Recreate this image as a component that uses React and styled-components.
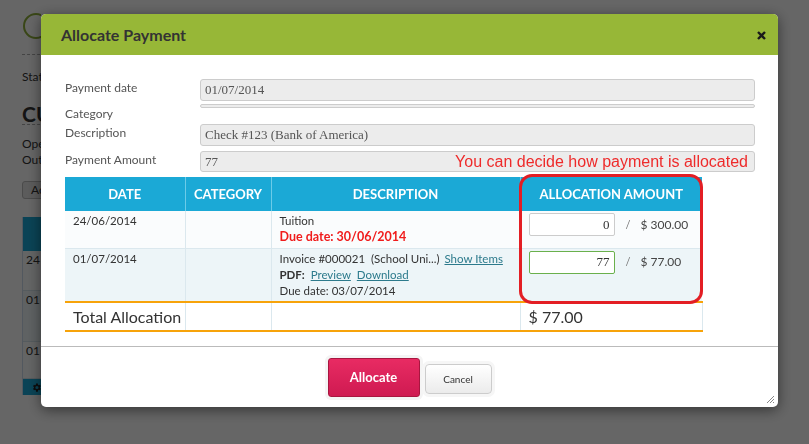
import styled, { createGlobalStyle } from 'styled-components';

const GlobalStyle = createGlobalStyle`
  html, body { margin: 0; padding: 0; background: #fff; }
  body { font-family: Lato, "Liberation Sans", Arial, sans-serif; color: #333; }
`;

// ---- page underneath the dialog (only its left strip shows) ----
const Page = styled.div`
  width: 41px;
  height: 444px;
  box-sizing: border-box;
  padding: 13px 0 0 22px;
  overflow: hidden;
  white-space: nowrap;
`;
const Avatar = styled.div`
  width: 22px;
  height: 22px;
  border: 2px solid #8fb03a;
  border-radius: 50%;
  margin-left: 1px;
`;
const Dashed = styled.div`
  width: 220px;
  border-top: 1px dashed #aaa;
  margin-top: ${p => p.$mt}px;
`;
const PageText = styled.div`
  font-size: 12px;
  line-height: 16px;
  margin-top: ${p => p.$mt || 0}px;
`;
const PageHeading = styled.div`
  font-size: 21px;
  font-weight: 700;
  line-height: 24px;
  margin-top: 17px;
`;
const PageButton = styled.div`
  width: fit-content;
  box-sizing: border-box;
  height: 18px;
  margin-top: 13px;
  padding: 0 20px 0 8px;
  font-size: 12px;
  line-height: 16px;
  background: #e6e6e6;
  border: 1px solid #bbb;
  border-radius: 3px;
`;
const PageTable = styled.div`
  width: 300px;
  margin-top: 18px;
  border-left: 1px solid #cde;
`;
const PageHead = styled.div`
  height: 34px;
  background: #1ba9d6;
`;
const PageRow = styled.div`
  height: ${p => p.$h}px;
  padding: 1px 0 0 3px;
  box-sizing: border-box;
  font-size: 12px;
  line-height: 16px;
  border-bottom: 1px solid #d4e3ea;
  background: ${p => p.$bg};
`;
const PageFoot = styled.div`
  height: 16px;
  background: #1ba9d6;
  padding-left: 8px;
  display: flex;
  align-items: center;
`;

// ---- dialog ----
const Overlay = styled.div`
  position: fixed;
  inset: 0;
  background: rgba(0, 0, 0, 0.6);
`;
const Modal = styled.div`
  position: fixed;
  left: 41px;
  top: 14px;
  width: 737px;
  height: 393px;
  background: #fff;
  border-radius: 5px;
  box-shadow: 0 3px 14px rgba(0, 0, 0, 0.5);
  display: flex;
  flex-direction: column;
  overflow: hidden;
`;
const Header = styled.div`
  height: 41px;
  flex: none;
  background: #97b737;
  display: flex;
  align-items: center;
  justify-content: space-between;
  padding: 0 10px 0 20px;
`;
const Title = styled.div`
  font-size: 16px;
  font-weight: 700;
  color: #333;
`;
const Close = styled.button`
  border: 0;
  background: none;
  padding: 0;
  width: 14px;
  height: 14px;
  display: flex;
  align-items: center;
  justify-content: center;
  margin-top: 2px;
`;
const Body = styled.div`
  flex: none;
  padding: 24px 23px 14px 24px;
  border-bottom: 1px solid #bbb;
`;
const FormRow = styled.div`
  display: flex;
  align-items: flex-start;
  margin-bottom: ${p => p.$mb}px;
`;
const Label = styled.div`
  width: 135px;
  flex: none;
  font-size: 12px;
  line-height: 14px;
  color: #555;
  padding-top: ${p => p.$pt}px;
`;
const Field = styled.div`
  flex: 1;
  height: ${p => p.$h}px;
  box-sizing: border-box;
  background: #ececec;
  border: 1px solid #ccc;
  border-radius: 3px;
  padding: 0 6px 0 4px;
  display: flex;
  align-items: center;
  justify-content: space-between;
  font-family: "Liberation Serif", Georgia, serif;
  font-size: 13px;
  color: #555;
`;
const Note = styled.span`
  font-family: "Liberation Sans", Arial, sans-serif;
  font-size: 16px;
  color: #ee2b2b;
`;
const TableWrap = styled.div`
  position: relative;
  width: 637px;
`;
const Table = styled.table`
  width: 637px;
  border-collapse: collapse;
  table-layout: fixed;
`;
const Th = styled.th`
  height: 34px;
  padding: 0;
  background: #1ba9d6;
  color: #fff;
  font-size: 13px;
  font-weight: 700;
  text-align: center;
  border-left: 1px solid #6ccbe8;
  &:first-child { border-left: 0; }
`;
const Tr = styled.tr`
  height: ${p => p.$h}px;
  background: ${p => p.$bg};
  border-bottom: 1px solid #dbe8ee;
`;
const Td = styled.td`
  vertical-align: top;
  padding: 2px 8px 0;
  font-size: 11.5px;
  line-height: 16px;
  color: #333;
  border-left: 1px solid #dbe8ee;
  &:first-child { border-left: 0; }
`;
const TotalRow = styled.tr`
  height: 29px;
  border-top: 2px solid #f7a30a;
  border-bottom: 2px solid #f7a30a;
`;
const TotalTd = styled.td`
  padding: 0 8px;
  font-size: 16px;
  line-height: 20px;
  white-space: nowrap;
  color: #333;
  border-left: 1px solid #dbe8ee;
  &:first-child { border-left: 0; }
  &:last-child { border-right: 1px solid #dbe8ee; }
`;
const Due = styled.div`
  color: ${p => (p.$red ? '#f01c1c' : '#333')};
  font-weight: ${p => (p.$red ? 700 : 400)};
  font-size: ${p => (p.$red ? '12.5px' : '11.5px')};
`;
const Link = styled.a`
  color: #2c7a8c;
  text-decoration: underline;
  margin-left: ${p => p.$ml || 0}px;
`;
const AllocCell = styled.div`
  display: flex;
  align-items: center;
  gap: 9px;
`;
const AmountInput = styled.div`
  width: 86px;
  height: 23px;
  box-sizing: border-box;
  background: #fff;
  border: 1px solid ${p => (p.$ok ? '#6ab04c' : '#ccc')};
  border-radius: 2px;
  padding: 0 4px;
  display: flex;
  align-items: center;
  justify-content: flex-end;
  font-family: "Liberation Serif", Georgia, serif;
  font-size: 13px;
  color: #333;
`;
const Slash = styled.span`
  font-size: 11px;
  color: #777;
  margin: 0 1px 0 2px;
`;
const Amount = styled.span`
  font-size: 12px;
  color: #444;
`;
const Highlight = styled.div`
  position: absolute;
  left: 454px;
  top: -3px;
  width: 184px;
  height: 130px;
  box-sizing: border-box;
  border: 3px solid #e31e24;
  border-radius: 13px;
  pointer-events: none;
`;
const Footer = styled.div`
  flex: 1;
  position: relative;
  display: flex;
  align-items: center;
  justify-content: center;
  gap: 5px;
`;
const AllocateBtn = styled.button`
  width: 92px;
  height: 39px;
  border: 1px solid #a8163f;
  border-radius: 3px;
  background: linear-gradient(#e82b63, #cf1a51);
  color: #fff;
  font-family: Lato, "Liberation Sans", Arial, sans-serif;
  font-size: 13px;
  font-weight: 700;
  box-shadow: 0 0 0 3px #f4f4f4;
`;
const CancelBtn = styled.button`
  width: 67px;
  height: 30px;
  margin-top: 3px;
  border: 1px solid #ccc;
  border-radius: 4px;
  background: linear-gradient(#fff, #ebebeb);
  color: #333;
  font-family: Lato, "Liberation Sans", Arial, sans-serif;
  font-size: 10px;
  box-shadow: 0 0 0 3px #f6f6f6;
`;
const Grip = styled.svg`
  position: absolute;
  right: 3px;
  bottom: 3px;
`;

export default function App() {
  return (
    <>
      <GlobalStyle />
      <Page>
        <Avatar />
        <Dashed $mt={15} />
        <PageText $mt={14}>Status</PageText>
        <PageHeading>CU</PageHeading>
        <Dashed $mt={-2} />
        <PageText $mt={11}>Ope</PageText>
        <PageText>Out</PageText>
        <PageButton>Add</PageButton>
        <PageTable>
          <PageHead />
          <PageRow $h={40} $bg="#fafcfd">24</PageRow>
          <PageRow $h={51} $bg="#edf5f8">01</PageRow>
          <PageRow $h={37} $bg="#fafcfd">01</PageRow>
          <PageFoot>
            <svg width="11" height="11" viewBox="0 0 24 24" fill="#222">
              <path d="M19.4 13a7.5 7.5 0 0 0 0-2l2.1-1.6-2-3.5-2.5 1a7 7 0 0 0-1.7-1L15 3h-4l-.4 2.9a7 7 0 0 0-1.7 1l-2.5-1-2 3.5L6.5 11a7.5 7.5 0 0 0 0 2l-2.1 1.6 2 3.5 2.5-1a7 7 0 0 0 1.7 1L11 21h4l.4-2.9a7 7 0 0 0 1.7-1l2.5 1 2-3.5zM13 15.5a3.5 3.5 0 1 1 0-7 3.5 3.5 0 0 1 0 7z" />
            </svg>
          </PageFoot>
        </PageTable>
      </Page>

      <Overlay />

      <Modal>
        <Header>
          <Title>Allocate Payment</Title>
          <Close aria-label="close">
            <svg width="9" height="9" viewBox="0 0 9 9">
              <path d="M1 1l7 7M8 1L1 8" stroke="#1a1a1a" strokeWidth="2.4" />
            </svg>
          </Close>
        </Header>

        <Body>
          <FormRow $mb={3}>
            <Label $pt={2}>Payment date</Label>
            <Field $h={22}>01/07/2014</Field>
          </FormRow>
          <FormRow $mb={3}>
            <Label $pt={3}>Category</Label>
            <Field $h={4} />
          </FormRow>
          <FormRow $mb={5}>
            <Label $pt={2}>Description</Label>
            <Field $h={22}>Check #123 (Bank of America)</Field>
          </FormRow>
          <FormRow $mb={5}>
            <Label $pt={2}>Payment Amount</Label>
            <Field $h={21}>
              77
              <Note>You can decide how payment is allocated</Note>
            </Field>
          </FormRow>

          <TableWrap>
            <Table>
              <colgroup>
                <col style={{ width: 120 }} />
                <col style={{ width: 86 }} />
                <col style={{ width: 249 }} />
                <col style={{ width: 182 }} />
              </colgroup>
              <thead>
                <tr>
                  <Th>DATE</Th>
                  <Th>CATEGORY</Th>
                  <Th>DESCRIPTION</Th>
                  <Th>ALLOCATION AMOUNT</Th>
                </tr>
              </thead>
              <tbody>
                <Tr $h={37} $bg="#fafcfd">
                  <Td>24/06/2014</Td>
                  <Td />
                  <Td>
                    Tuition
                    <Due $red>Due date: 30/06/2014</Due>
                  </Td>
                  <Td>
                    <AllocCell>
                      <AmountInput>0</AmountInput>
                      <Slash>/</Slash>
                      <Amount>$ 300.00</Amount>
                    </AllocCell>
                  </Td>
                </Tr>
                <Tr $h={54} $bg="#edf5f8">
                  <Td>01/07/2014</Td>
                  <Td />
                  <Td>
                    Invoice #000021&nbsp; (School Uni...) <Link $ml={2}>Show Items</Link>
                    <div>
                      <b>PDF:</b> <Link $ml={3}>Preview</Link> <Link $ml={3}>Download</Link>
                    </div>
                    <Due>Due date: 03/07/2014</Due>
                  </Td>
                  <Td>
                    <AllocCell>
                      <AmountInput $ok>77</AmountInput>
                      <Slash>/</Slash>
                      <Amount>$ 77.00</Amount>
                    </AllocCell>
                  </Td>
                </Tr>
                <TotalRow>
                  <TotalTd>Total Allocation</TotalTd>
                  <TotalTd />
                  <TotalTd />
                  <TotalTd>$ 77.00</TotalTd>
                </TotalRow>
              </tbody>
            </Table>
            <Highlight />
          </TableWrap>
        </Body>

        <Footer>
          <AllocateBtn>Allocate</AllocateBtn>
          <CancelBtn>Cancel</CancelBtn>
          <Grip width="10" height="10" viewBox="0 0 10 10">
            <path d="M9 2L2 9M9 5L5 9M9 8L8 9" stroke="#888" strokeWidth="1" />
          </Grip>
        </Footer>
      </Modal>
    </>
  );
}
